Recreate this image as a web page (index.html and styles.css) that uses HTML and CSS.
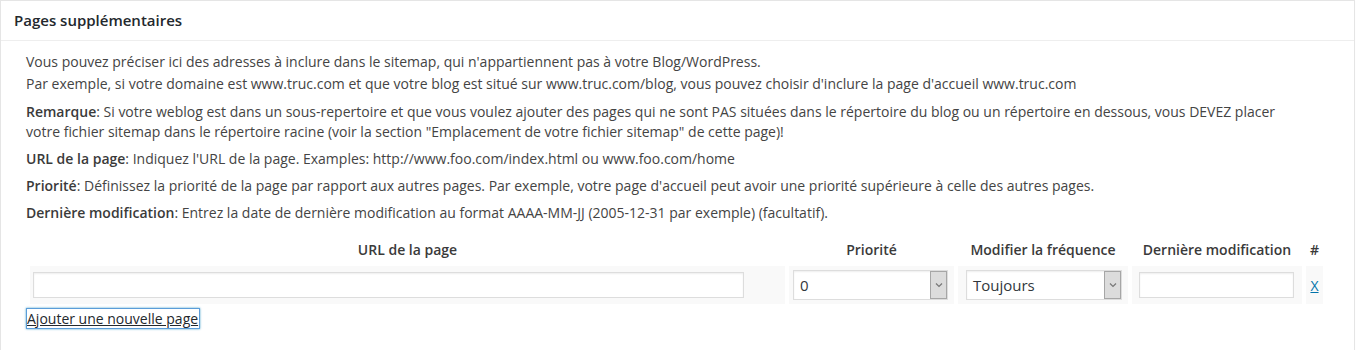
FILE: index.html
```html
<!DOCTYPE html>
<html lang="fr">
<head>
<meta charset="utf-8">
<title>Pages supplémentaires</title>
<link rel="stylesheet" href="styles.css">
</head>
<body>
<div class="postbox">
  <h2 class="hndle">Pages supplémentaires</h2>
  <div class="inside">
    <p class="intro">Vous pouvez préciser ici des adresses à inclure dans le sitemap, qui n'appartiennent pas à votre Blog/WordPress.<br>Par exemple, si votre domaine est www.truc.com et que votre blog est situé sur www.truc.com/blog, vous pouvez choisir d'inclure la page d'accueil www.truc.com</p>
    <p class="note"><strong>Remarque</strong>: Si votre weblog est dans un sous-repertoire et que vous voulez ajouter des pages qui ne sont PAS situées dans le répertoire du blog ou un répertoire en dessous, vous DEVEZ placer votre fichier sitemap dans le répertoire racine (voir la section "Emplacement de votre fichier sitemap" de cette page)!</p>
    <p><strong>URL de la page</strong>: Indiquez l'URL de la page. Examples: http://www.foo.com/index.html ou www.foo.com/home</p>
    <p><strong>Priorité</strong>: Définissez la priorité de la page par rapport aux autres pages. Par exemple, votre page d'accueil peut avoir une priorité supérieure à celle des autres pages.</p>
    <p><strong>Dernière modification</strong>: Entrez la date de dernière modification au format AAAA-MM-JJ (2005-12-31 par exemple) (facultatif).</p>
    <table class="pages">
      <thead>
        <tr>
          <th class="c-url">URL de la page</th>
          <th class="c-prio">Priorité</th>
          <th class="c-freq">Modifier la fréquence</th>
          <th class="c-date">Dernière modification</th>
          <th class="c-del">#</th>
        </tr>
      </thead>
      <tbody>
        <tr>
          <td class="c-url"><input type="text" class="url-input"></td>
          <td class="c-prio">
            <div class="fake-select prio-select"><span class="val">0</span><span class="arrow"><svg width="8" height="6" viewBox="0 0 8 6"><path d="M1 1.5 L4 4.5 L7 1.5" fill="none" stroke="#777" stroke-width="1.2"/></svg></span></div>
          </td>
          <td class="c-freq">
            <div class="fake-select freq-select"><span class="val">Toujours</span><span class="arrow"><svg width="8" height="6" viewBox="0 0 8 6"><path d="M1 1.5 L4 4.5 L7 1.5" fill="none" stroke="#777" stroke-width="1.2"/></svg></span></div>
          </td>
          <td class="c-date"><input type="text" class="date-input"></td>
          <td class="c-del"><a href="#" class="del">X</a></td>
        </tr>
      </tbody>
    </table>
    <a href="#" class="add-link">Ajouter une nouvelle page</a>
  </div>
</div>
</body>
</html>
```
FILE: styles.css
```css
html, body {
  margin: 0;
  padding: 0;
  background: #fff;
}
body {
  font-family: "Open Sans", "Liberation Sans", sans-serif;
  font-size: 14px;
  color: #444;
}
.postbox {
  width: 1353px;
  height: 400px;
  border: 1px solid #e5e5e5;
  box-shadow: 0 1px 1px rgba(0,0,0,.04);
  background: #fff;
}
.hndle {
  margin: 0;
  height: 39px;
  line-height: 39px;
  padding: 0 13px;
  font-size: 15px;
  font-weight: 600;
  color: #23282d;
  border-bottom: 1px solid #eee;
}
.inside {
  padding: 10px 25px 0;
}
.inside p {
  margin: 7px 0;
  line-height: 20px;
}
.inside p.intro {
  margin-top: 0;
  line-height: 22px;
}
.inside p.note {
  max-width: 1255px;
}
.inside strong {
  font-weight: 600;
  color: #3a3a3a;
}
.pages {
  border-collapse: separate;
  border-spacing: 4px 0;
  margin: 10px 0 0 0;
  table-layout: fixed;
  width: 1301px;
}
.pages th {
  font-weight: 600;
  color: #3a3a3a;
  padding: 8px 0;
  line-height: 17px;
  text-align: center;
  white-space: nowrap;
}
.pages td {
  background: #f9f9f9;
  height: 38px;
  padding: 0;
  vertical-align: middle;
}
.pages th, .pages td {
  box-sizing: border-box;
}
.c-url { width: 755px; }
.c-prio { width: 165px; }
.c-freq { width: 170px; }
.c-date { width: 170px; }
.c-del { width: 17px; }
td.c-url { padding-left: 3px; }
td.c-prio { padding-left: 4px; }
td.c-freq { padding-left: 8px; }
td.c-date { padding-left: 7px; }
td.c-del { text-align: center; }
input[type="text"] {
  box-sizing: border-box;
  display: block;
  height: 26px;
  margin: 0;
  border: 1px solid #ddd;
  box-shadow: inset 0 1px 2px rgba(0,0,0,.07);
  background: #fff;
  font: inherit;
}
.url-input { width: 711px; }
.date-input { width: 155px; }
.fake-select {
  box-sizing: border-box;
  display: flex;
  align-items: stretch;
  height: 30px;
  border: 1px solid #ddd;
  background: #fff;
  box-shadow: inset 0 1px 2px rgba(0,0,0,.07);
}
.prio-select { width: 155px; }
.freq-select { width: 156px; }
.fake-select .val {
  flex: 1;
  display: flex;
  align-items: center;
  padding-left: 6px;
  font-size: 15px;
  color: #32373c;
}
.fake-select .arrow {
  box-sizing: border-box;
  width: 17px;
  display: flex;
  align-items: center;
  justify-content: center;
  background: #dcdcdc;
  border: 1px solid #a6a6a6;
}
.del {
  color: #0073aa;
  text-decoration: underline;
  font-size: 14px;
}
.add-link {
  display: inline-block;
  margin-top: 4px;
  padding: 0 1px 0 0;
  line-height: 19px;
  color: #23282d;
  text-decoration: underline;
  border: 1px solid #5b9dd9;
  box-shadow: 0 0 2px rgba(30,140,190,.8);
}
```
